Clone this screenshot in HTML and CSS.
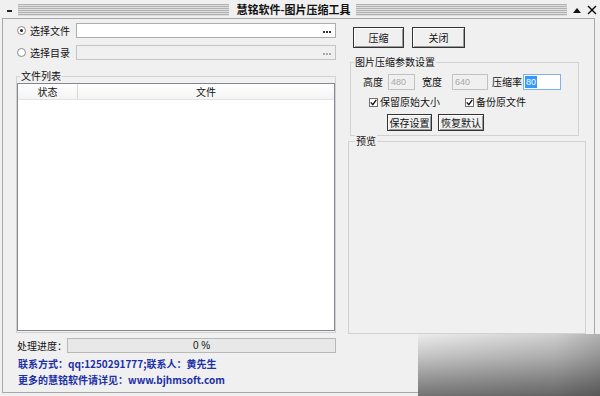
FILE: index.html
```html
<!DOCTYPE html>
<html lang="zh-CN">
<head>
<meta charset="utf-8">
<title>慧铭软件-图片压缩工具</title>
<link rel="stylesheet" href="styles.css">
</head>
<body>
<div class="window">
  <div class="titlebar">
    <span class="sysmenu"></span>
    <span class="stripes"></span>
    <span class="title">慧铭软件-图片压缩工具</span>
    <span class="stripes"></span>
    <span class="tbtns">
      <svg class="tb-up" width="8" height="5" viewBox="0 0 8 5"><polygon points="0,5 8,5 4,0" fill="#111"/></svg>
      <svg class="tb-x" width="10" height="10" viewBox="0 0 10 10"><path d="M1 1 L9 9 M9 1 L1 9" stroke="#000" stroke-width="1.4" fill="none"/></svg>
    </span>
  </div>
  <div class="body">
    <div class="left">
      <div class="row row1">
        <label class="opt"><span class="radio checked"></span><span class="optlabel">选择文件</span></label>
        <div class="pathbox"><span class="dots"><i></i><i></i><i></i></span></div>
      </div>
      <div class="row row2">
        <label class="opt"><span class="radio"></span><span class="optlabel">选择目录</span></label>
        <div class="pathbox disabled"><span class="dots"><i></i><i></i><i></i></span></div>
      </div>
      <div class="group filegroup">
        <span class="legend">文件列表</span>
        <div class="listview">
          <div class="lvhead">
            <div class="col col-status">状态</div>
            <div class="col col-file">文件</div>
          </div>
        </div>
      </div>
      <div class="row progressrow">
        <span class="plabel">处理进度：</span>
        <div class="progress">0 %</div>
      </div>
      <div class="contact">联系方式：qq:1250291777;联系人：黄先生</div>
      <div class="contact">更多的慧铭软件请详见：www.bjhmsoft.com</div>
    </div>
    <div class="right">
      <div class="btnrow">
        <button class="btn btn-compress">压缩</button>
        <button class="btn btn-close">关闭</button>
      </div>
      <div class="group paramgroup">
        <span class="legend">图片压缩参数设置</span>
        <div class="prow">
          <span class="plbl lbl-h">高度</span>
          <div class="num num-h disabled">480</div>
          <span class="plbl lbl-w">宽度</span>
          <div class="num num-w disabled">640</div>
          <span class="plbl lbl-r">压缩率</span>
          <div class="num num-r"><span class="sel">80</span></div>
        </div>
        <div class="crow">
          <span class="check"><svg width="7" height="7" viewBox="0 0 7 7"><path d="M0.8 3.4 L2.8 5.6 L6.3 0.9" fill="none" stroke="#111" stroke-width="1.4"/></svg></span>
          <span class="clabel c1">保留原始大小</span>
          <span class="check check2"><svg width="7" height="7" viewBox="0 0 7 7"><path d="M0.8 3.4 L2.8 5.6 L6.3 0.9" fill="none" stroke="#111" stroke-width="1.4"/></svg></span>
          <span class="clabel">备份原文件</span>
        </div>
        <div class="brow">
          <button class="btn sbtn btn-save">保存设置</button>
          <button class="btn sbtn btn-reset">恢复默认</button>
        </div>
      </div>
      <div class="group previewgroup">
        <span class="legend">预览</span>
      </div>
    </div>
  </div>
  <div class="shade"></div>
</div>
</body>
</html>
```
FILE: styles.css
```css
* { box-sizing: border-box; }
html, body { margin: 0; padding: 0; }
body {
  width: 600px;
  height: 396px;
  overflow: hidden;
  background: #f0f0f0;
  font-family: "Noto Sans CJK SC", "Noto Sans", sans-serif;
  font-size: 10px;
  color: #111;
}
.window {
  position: relative;
  width: 600px;
  height: 396px;
  background: #f0f0f0;
}
.titlebar {
  height: 18px;
  display: flex;
  align-items: center;
  padding-left: 7px;
}
.sysmenu {
  width: 5px;
  height: 2px;
  background: #222;
  margin-top: 4px;
  margin-right: 6px;
}
.stripes {
  flex: 1;
  height: 12px;
  margin-top: 2px;
  background: repeating-linear-gradient(to bottom, #b2b2b2 0 1px, #dedede 1px 2px);
}
.title {
  font-weight: bold;
  font-size: 11px;
  padding: 0 5px 0 7px;
  line-height: 14px;
  color: #111;
}
.tbtns {
  width: 33px;
  display: flex;
  align-items: center;
  padding-left: 6px;
  padding-top: 2px;
}
.tb-up { margin-right: 6px; flex: none; }
.tb-x { flex: none; }
.body {
  height: 375px;
  margin: 0 5px 3px 2px;
  border: 1px solid #a8a8a8;
  display: flex;
  padding-left: 13px;
}
.left {
  width: 320px;
  display: flex;
  flex-direction: column;
}
.row {
  display: flex;
  align-items: center;
  height: 15px;
}
.row1 { margin-top: 4px; }
.row2 { margin-top: 7px; }
.opt {
  width: 60px;
  display: flex;
  align-items: center;
}
.radio {
  width: 9px;
  height: 9px;
  border-radius: 50%;
  border: 1px solid #8a8a8a;
  background: #fff;
  margin-left: 1px;
  position: relative;
}
.radio.checked::after {
  content: "";
  position: absolute;
  left: 2px;
  top: 2px;
  width: 3px;
  height: 3px;
  border-radius: 50%;
  background: #222;
}
.optlabel { margin-left: 4px; line-height: 12px; }
.pathbox {
  flex: 1;
  height: 15px;
  border: 1px solid #adadad;
  background: #fff;
  display: flex;
  justify-content: flex-end;
  align-items: center;
  padding-right: 4px;
}
.pathbox.disabled { background: #f0f0f0; border-color: #c4c4c4; }
.dots { display: flex; gap: 1px; margin-top: 2px; }
.dots i { width: 2px; height: 2px; background: #333; }
.pathbox.disabled .dots i { background: #aaa; }
.group {
  position: relative;
  border: 1px solid #d2d2d2;
}
.legend {
  position: absolute;
  top: -8px;
  left: 3px;
  padding: 0 1px;
  background: #f0f0f0;
  line-height: 13px;
}
.filegroup {
  margin-top: 16px;
  height: 257px;
  padding: 6px 0 1px 0;
  display: flex;
  flex-direction: column;
}
.listview {
  flex: 1;
  border: 1px solid #828790;
  background: #fff;
}
.lvhead {
  display: flex;
  height: 16px;
  border-bottom: 1px solid #e2e2e2;
  background: linear-gradient(#ffffff, #f4f4f4);
}
.col {
  text-align: center;
  line-height: 15px;
}
.col-status { width: 60px; border-right: 1px solid #d8d8d8; }
.col-file { flex: 1; }
.progressrow { margin-top: 5px; }
.plabel { width: 51px; padding-left: 1px; line-height: 12px; }
.progress {
  flex: 1;
  height: 15px;
  border: 1px solid #b8b8b8;
  background: #e8e8e8;
  text-align: center;
  line-height: 13px;
  font-family: "Liberation Sans", "Noto Sans", sans-serif;
  font-size: 10px;
}
.contact {
  color: #1b2fa6;
  font-weight: bold;
  line-height: 16px;
  padding-left: 2px;
}
.progressrow + .contact { margin-top: 3px; }
.right {
  width: 238px;
  margin-left: 12px;
  display: flex;
  flex-direction: column;
}
.btnrow {
  display: flex;
  margin-top: 8px;
  padding-left: 5px;
}
.btn {
  font-family: "Noto Sans CJK SC", sans-serif;
  font-size: 10px;
  color: #111;
  background: #f0f0f0;
  border: 1px solid #333;
  box-shadow: inset 1px 1px 0 #fff, inset -1px -1px 0 #9a9a9a;
  padding: 0;
  margin: 0;
  line-height: 12px;
}
.btn-compress { width: 51px; height: 21px; }
.btn-close { width: 53px; height: 21px; margin-left: 8px; }
.paramgroup {
  margin-top: 14px;
  margin-left: 2px;
  width: 229px;
  height: 74px;
  padding: 11px 0 0 12px;
}
.prow {
  display: flex;
  align-items: center;
  height: 16px;
}
.plbl { line-height: 12px; }
.lbl-h { width: 20px; }
.lbl-w { width: 20px; margin-left: 7px; }
.lbl-r { width: 30px; margin-left: 4px; }
.num {
  height: 16px;
  border: 1px solid #c2c2c2;
  background: #fff;
  font-family: "Liberation Sans", sans-serif;
  font-size: 9px;
  line-height: 14px;
  padding-left: 2px;
}
.num.disabled { background: #f0f0f0; color: #a8a8a8; }
.num-h { width: 27px; margin-left: 5px; }
.num-w { width: 36px; margin-left: 10px; }
.num-r { width: 38px; margin-left: 1px; border-color: #7eb4ea; padding-left: 1px; }
.sel {
  display: inline-block;
  background: #3399ff;
  color: #fff;
  line-height: 12px;
  padding: 0 1px;
  margin-top: 1px;
}
.crow {
  display: flex;
  align-items: center;
  height: 12px;
  margin-top: 6px;
  padding-left: 6px;
}
.check {
  width: 9px;
  height: 9px;
  border: 1px solid #707070;
  background: #fff;
  display: flex;
  align-items: center;
  justify-content: center;
}
.clabel { margin-left: 2px; line-height: 12px; }
.c1 { width: 85px; }
.brow {
  display: flex;
  margin-top: 6px;
  padding-left: 24px;
}
.sbtn { height: 17px; }
.btn-save { width: 45px; }
.btn-reset { width: 46px; margin-left: 6px; }
.previewgroup {
  margin-top: 5px;
  width: 238px;
  height: 193px;
}
.previewgroup .legend { left: 6px; }
.shade {
  position: absolute;
  left: 418px;
  top: 334px;
  width: 182px;
  height: 62px;
  background:
    linear-gradient(to right, rgba(0,0,0,0) 0%, rgba(0,0,0,0.12) 75%, rgba(0,0,0,0.25) 100%),
    linear-gradient(to bottom, #ececec 0%, #c6c6c6 35%, #929292 75%, #737373 100%);
}
```
